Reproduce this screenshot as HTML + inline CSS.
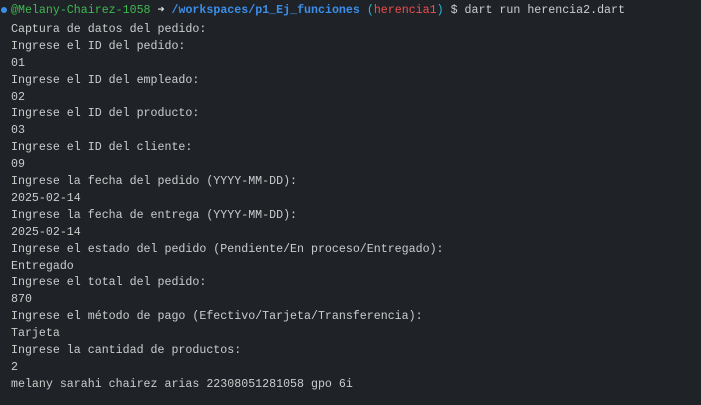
<!DOCTYPE html>
<html><head><meta charset="utf-8"><style>
html,body{margin:0;padding:0;width:701px;height:405px;background:#1f2328;overflow:hidden}
pre{margin:0;position:absolute;left:11px;font-family:"Liberation Mono","DejaVu Sans Mono",monospace;font-size:11.63px;line-height:16.9px;color:#cccccc;white-space:pre}
.dot{position:absolute;left:1px;top:7px;width:6px;height:6px;border-radius:50%;background:#3b8eea}
.g{color:#3fb950}.b{color:#3b8eea;font-weight:bold}.w{color:#e6e6e6;font-weight:bold}.c{color:#29b8db}.r{color:#f14c4c}
</style></head><body><div class="dot"></div><pre style="top:3px"><span class="g">@Melany-Chairez-1058</span> <span class="w">➜</span> <span class="b">/workspaces/p1_Ej_funciones</span> <span class="c">(</span><span class="r">herencia1</span><span class="c">)</span> $ dart run herencia2.dart</pre><pre style="top:21.9px">Captura de datos del pedido:
Ingrese el ID del pedido:
01
Ingrese el ID del empleado:
02
Ingrese el ID del producto:
03
Ingrese el ID del cliente:
09
Ingrese la fecha del pedido (YYYY-MM-DD):
2025-02-14
Ingrese la fecha de entrega (YYYY-MM-DD):
2025-02-14
Ingrese el estado del pedido (Pendiente/En proceso/Entregado):
Entregado
Ingrese el total del pedido:
870
Ingrese el método de pago (Efectivo/Tarjeta/Transferencia):
Tarjeta
Ingrese la cantidad de productos:
2
melany sarahi chairez arias 22308051281058 gpo 6i</pre></body></html>
